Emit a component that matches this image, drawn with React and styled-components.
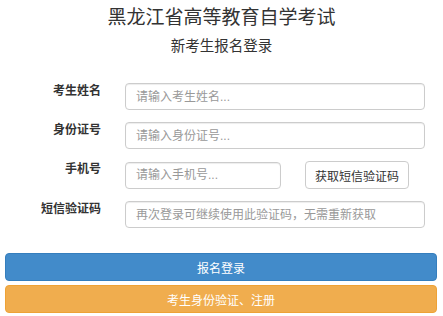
import styled, { createGlobalStyle } from 'styled-components';

const GlobalStyle = createGlobalStyle`
  body {
    margin: 0;
    background: #fff;
    font-family: "Liberation Sans", "Noto Sans CJK SC", sans-serif;
    color: #333;
  }
`;

export default function App() {
  return (
    <Page>
      <GlobalStyle />
      <Header>
        <Title>黑龙江省高等教育自学考试</Title>
        <SubTitle>新考生报名登录</SubTitle>
      </Header>
      <Form onSubmit={(e) => e.preventDefault()}>
        <Row>
          <Label>考生姓名</Label>
          <Input placeholder="请输入考生姓名..." />
        </Row>
        <Row>
          <Label>身份证号</Label>
          <Input placeholder="请输入身份证号..." />
        </Row>
        <Row>
          <Label>手机号</Label>
          <Field>
            <Input $width="156px" placeholder="请输入手机号..." />
            <CodeButton type="button">获取短信验证码</CodeButton>
          </Field>
        </Row>
        <Row>
          <Label>短信验证码</Label>
          <Input placeholder="再次登录可继续使用此验证码，无需重新获取" />
        </Row>
      </Form>
      <Actions>
        <WideButton type="button" $bg="#428bca" $border="#357ebd">报名登录</WideButton>
        <WideButton type="button" $bg="#f0ad4e" $border="#eea236">考生身份验证、注册</WideButton>
      </Actions>
    </Page>
  );
}

const Page = styled.div`
  width: 443px;
  padding-top: 6px;
`;

const Header = styled.div`
  display: flex;
  flex-direction: column;
  align-items: center;
`;

const Title = styled.h1`
  margin: 0;
  font-size: 19px;
  font-weight: normal;
  line-height: 24px;
  color: #333;
`;

const SubTitle = styled.h2`
  margin: 6px 0 0;
  font-size: 14.5px;
  font-weight: normal;
  line-height: 20px;
  color: #333;
`;

const Form = styled.form`
  display: flex;
  flex-direction: column;
  gap: 12px;
  margin-top: 27px;
`;

const Row = styled.div`
  display: grid;
  grid-template-columns: 101px 300px;
  column-gap: 24px;
  align-items: start;
`;

const Label = styled.label`
  text-align: right;
  font-size: 12px;
  font-weight: bold;
  line-height: 17px;
  color: #333;
`;

const Field = styled.div`
  display: flex;
  align-items: center;
  gap: 24px;
`;

const Input = styled.input`
  box-sizing: border-box;
  width: ${(p) => p.$width || '300px'};
  height: 27px;
  padding: 0 10px;
  border: 1px solid #ccc;
  border-radius: 4px;
  box-shadow: inset 0 1px 1px rgba(0, 0, 0, 0.075);
  font-family: inherit;
  font-size: 12px;
  color: #555;
  outline: none;
  &::placeholder {
    color: #999;
  }
`;

const CodeButton = styled.button`
  box-sizing: border-box;
  width: 104px;
  height: 28px;
  padding: 0;
  background: #fff;
  border: 1px solid #ccc;
  border-radius: 4px;
  font-family: inherit;
  font-size: 12px;
  color: #333;
`;

const Actions = styled.div`
  display: flex;
  flex-direction: column;
  gap: 4px;
  margin: 25px 6px 0 5px;
`;

const WideButton = styled.button`
  box-sizing: border-box;
  height: 28px;
  background: ${(p) => p.$bg};
  border: 1px solid ${(p) => p.$border};
  border-radius: 4px;
  font-family: inherit;
  font-size: 12px;
  color: #fff;
`;
